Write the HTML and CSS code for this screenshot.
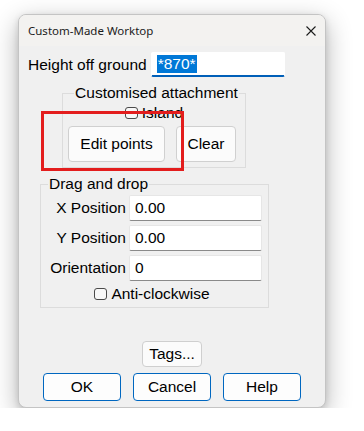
FILE: index.html
```html
<!DOCTYPE html>
<html lang="en">
<head>
    <meta charset="UTF-8">
    <meta name="viewport" content="width=device-width, initial-scale=1.0">
    <title>Custom-Made Worktop</title>
    <link rel="stylesheet" href="styles.css">
</head>
<body>
    <div class="dialog">
        <div class="title-bar">
            <span class="title">Custom-Made Worktop</span>
            <svg class="close" width="10" height="10" viewBox="0 0 10 10">
                <path d="M0.5 0.5 L9.5 9.5 M9.5 0.5 L0.5 9.5" stroke="#1b1b1b" stroke-width="1.1" fill="none"/>
            </svg>
        </div>

        <div class="content">
            <div class="height-row">
                <label>Height off ground</label>
                <div class="field focused"><span class="selected">*870*</span></div>
            </div>

            <fieldset class="group attach">
                <legend>Customised attachment</legend>
                <div class="check-row">
                    <span class="check"></span><span>Island</span>
                </div>
                <div class="button-row">
                    <button class="btn edit">Edit points</button>
                    <button class="btn clear">Clear</button>
                </div>
            </fieldset>

            <fieldset class="group drag">
                <legend>Drag and drop</legend>
                <div class="pos-grid">
                    <label>X Position</label>
                    <input type="text" class="field" value="0.00" readonly>
                    <label>Y Position</label>
                    <input type="text" class="field" value="0.00" readonly>
                    <label>Orientation</label>
                    <input type="text" class="field" value="0" readonly>
                </div>
                <div class="check-row">
                    <span class="check"></span><span>Anti-clockwise</span>
                </div>
            </fieldset>

            <div class="footer">
                <button class="btn tags">Tags...</button>
                <div class="actions">
                    <button class="btn primary">OK</button>
                    <button class="btn primary">Cancel</button>
                    <button class="btn primary">Help</button>
                </div>
            </div>
        </div>

        <!-- highlight drawn over the dialog -->
        <div class="highlight"></div>
    </div>
</body>
</html>
```

FILE: styles.css
```css
:root {
    --text: #000;
    --face: #f0f0f0;
    --group-border: #dcdcdc;
    --accent: #0067c0;
    --font: 'Liberation Sans', Arial, sans-serif;
}

* {
    box-sizing: border-box;
}

body {
    margin: 0;
    background: #fff;
    font-family: var(--font);
    color: var(--text);
}

.dialog {
    position: relative;
    margin: 14px 0 0 18px;
    width: 308px;
    height: 394px;
    background: var(--face);
    border: 1px solid #c4c4c4;
    border-radius: 8px;
    box-shadow: 0 8px 26px rgba(0, 0, 0, 0.3), 0 2px 6px rgba(0, 0, 0, 0.12);
    display: flex;
    flex-direction: column;
    overflow: hidden;
}

.title-bar {
    height: 31px;
    background: #f3f2f0;
    display: flex;
    align-items: center;
    justify-content: space-between;
    padding: 0 9px 0 9px;
}

.title {
    font-family: 'Noto Sans', sans-serif;
    font-size: 11.5px;
    color: #1b1b1b;
}

.content {
    flex: 1;
    display: flex;
    flex-direction: column;
    padding: 6px 0 6px 9px;
    font-size: 15.5px;
}

.height-row {
    display: flex;
    align-items: center;
    gap: 4px;
}

.field {
    display: block;
    background: #fff;
    border: 1px solid #e6e6e6;
    border-bottom-color: #8a8a8a;
    border-radius: 2px;
    height: 26px;
    padding: 0 5px;
    font-family: var(--font);
    font-size: 15.5px;
    color: var(--text);
    outline: none;
}

.field.focused {
    width: 134px;
    height: 25px;
    border-color: #fff;
    border-bottom: 2px solid #005fb8;
    display: flex;
    align-items: center;
    padding-left: 5px;
}

.selected {
    background: #0078d7;
    color: #fff;
    line-height: 18px;
    padding: 0 1px;
}

.group {
    border: 1px solid var(--group-border);
    margin: 0;
    padding: 0;
}

.group legend {
    padding: 0 1px;
    line-height: 18px;
}

.attach {
    width: 184px;
    margin: 7px 0 0 34px;
    padding: 0 0 5px 5px;
}

.attach legend {
    margin: 0 auto;
}

.check-row {
    display: flex;
    align-items: center;
    justify-content: center;
    gap: 4px;
    height: 18px;
}

.check {
    width: 13px;
    height: 12px;
    border: 1px solid #4a4a4a;
    border-radius: 3px;
    background: #f8f8f8;
}

.attach .check-row {
    margin: 2px 0 0 -5px;
}

.button-row {
    display: flex;
    gap: 11px;
    margin-top: 4px;
}

.btn {
    font-family: var(--font);
    font-size: 15.5px;
    color: var(--text);
    background: #fbfbfb;
    border: 1px solid #d0d0d0;
    border-radius: 4px;
    padding: 0;
}

.edit {
    width: 97px;
    height: 36px;
}

.clear {
    width: 60px;
    height: 36px;
}

.drag {
    width: 229px;
    margin: 7px 0 0 12px;
    padding: 0 5px 4px 0;
}

.drag legend {
    margin-left: 7px;
}

.pos-grid {
    display: grid;
    grid-template-columns: 85px 133px;
    grid-auto-rows: 26px;
    column-gap: 3px;
    row-gap: 4px;
    align-items: center;
    margin-top: 2px;
}

.pos-grid label {
    text-align: right;
}

.pos-grid .field {
    width: 133px;
}

.drag .check-row {
    margin-top: 4px;
}

.footer {
    margin-top: auto;
    display: flex;
    flex-direction: column;
    align-items: center;
    gap: 6px;
    padding-right: 9px;
}

.tags {
    width: 60px;
    height: 26px;
    border-color: #cfcfcf;
}

.actions {
    display: flex;
    gap: 12px;
}

.primary {
    width: 78px;
    height: 28px;
    background: #fdfdfd;
    border-color: var(--accent);
}

.highlight {
    position: absolute;
    left: 22px;
    top: 96px;
    width: 143px;
    height: 60px;
    border: 3px solid #e31d1d;
}
```
